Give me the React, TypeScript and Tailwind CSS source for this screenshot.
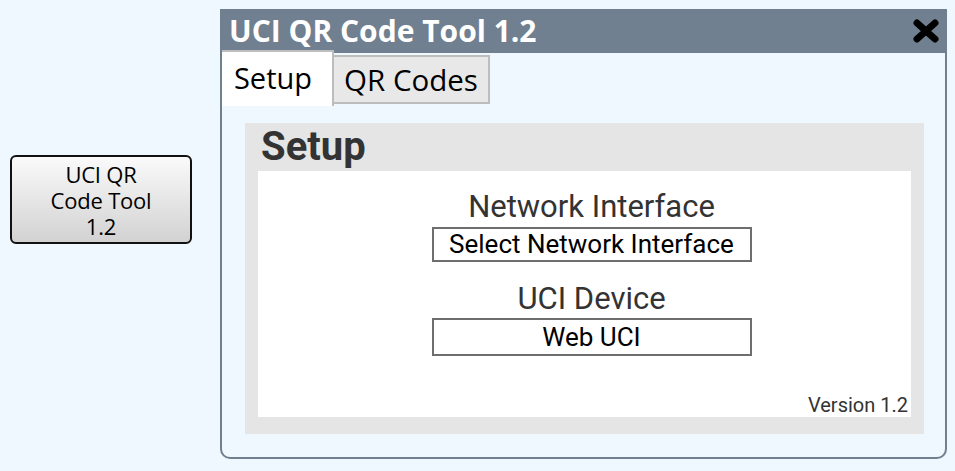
import React from "react";

const segoe = { fontFamily: '"Open Sans", "Noto Sans", sans-serif' };

export default function App() {
  return (
    <div className="relative h-[471px] w-[955px] overflow-hidden bg-[#f0f8ff]">
      <div className="flex h-full items-start">
        {/* launcher button */}
        <div className="ml-[10px] mt-[155px]">
          <button
            type="button"
            style={segoe}
            className="flex h-[89px] w-[182px] flex-col items-center justify-center rounded-[6px] border-2 border-[#111] bg-gradient-to-b from-[#fafafa] via-[#e6e6e6] to-[#d2d2d2] text-[22px] leading-[26px] tracking-[-0.2px] text-black"
          >
            <span>UCI QR</span>
            <span>Code Tool</span>
            <span>1.2</span>
          </button>
        </div>

        {/* tool window */}
        <div className="ml-[28px] mt-[9px] flex h-[450px] w-[727px] flex-col rounded-b-[10px] border-2 border-t-0 border-[#708090] bg-[#f0f8ff]">
          <div className="-mx-[2px] flex h-[44px] items-center justify-between bg-[#708090] pl-[9px] pr-[8px]">
            <span style={segoe} className="text-[30px] font-bold leading-none text-white">
              UCI QR Code Tool 1.2
            </span>
            <svg width="26" height="24" viewBox="0 0 26 24">
              <path d="M4 4 L22 20 M22 4 L4 20" stroke="#000" strokeWidth="7" strokeLinecap="round" />
            </svg>
          </div>

          <div className="flex h-[53px] items-end">
            <div
              style={segoe}
              className="-mt-[3px] flex h-[56px] w-[112px] items-center justify-center self-start border-r-2 border-t-2 border-[#bdbdbd] bg-white pb-[2px] pr-[8px] text-[29px] text-black"
            >
              Setup
            </div>
            <div
              style={segoe}
              className="mb-[2px] flex h-[49px] w-[156px] items-center justify-center border-2 border-l-0 border-[#bdbdbd] bg-[#e8e8e8] pt-[2px] text-[29.5px] text-black"
            >
              QR Codes
            </div>
          </div>

          <div className="ml-[23px] mr-[21px] mt-[17px] flex flex-col bg-[#e5e5e5] px-[13px] pb-[17px]">
            <div className="flex h-[48px] items-center pl-[3px] font-['Roboto'] text-[40px] font-bold text-[#333]">
              Setup
            </div>
            <div className="relative flex h-[246px] flex-col items-center bg-white pl-[14px] font-['Roboto']">
              <div className="mt-[16px] text-[31px] leading-[40px] text-[#333]">Network Interface</div>
              <div className="flex h-[35px] w-[320px] items-center justify-center border-2 border-[#6e6e6e] text-[26px] text-black">
                Select Network Interface
              </div>
              <div className="mt-[18px] text-[31px] leading-[38px] text-[#333]">UCI Device</div>
              <div className="flex h-[38px] w-[320px] items-center justify-center border-2 border-[#6e6e6e] text-[26px] text-black">
                Web UCI
              </div>
              <div className="absolute bottom-[2px] right-[3px] text-[20px] leading-none text-[#333]">Version 1.2</div>
            </div>
          </div>
        </div>
      </div>
    </div>
  );
}
